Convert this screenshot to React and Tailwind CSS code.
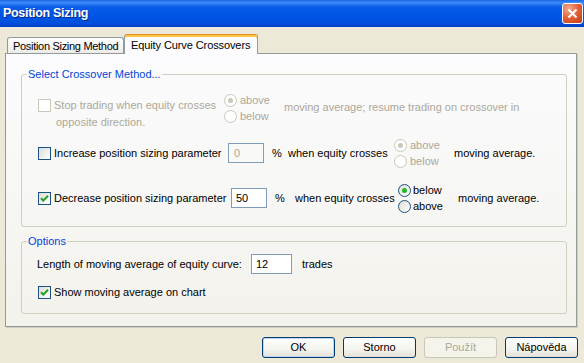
import React from "react";

function Checkbox({ checked, disabled }) {
  return (
    <span
      className={`w-[13px] h-[13px] shrink-0 border flex items-center justify-center ${
        disabled
          ? "border-[#cac8bb] bg-white"
          : "border-[#1c5180] bg-[linear-gradient(135deg,#dcdcd7,#ffffff)]"
      }`}
    >
      {checked && (
        <svg width="9" height="9" viewBox="0 0 9 9">
          <path d="M1 4.2 L3.3 6.6 L8 1.8" fill="none" stroke="#21a121" strokeWidth="2" />
        </svg>
      )}
    </span>
  );
}

function Radio({ checked, disabled }) {
  return (
    <span
      className={`w-[13px] h-[13px] shrink-0 rounded-full border flex items-center justify-center ${
        disabled
          ? "border-[#cac8bb] bg-white"
          : "border-[#1c5180] bg-[linear-gradient(135deg,#dcdcd7,#ffffff)]"
      }`}
    >
      {checked && (
        <span
          className={`w-[5px] h-[5px] rounded-full ${
            disabled ? "bg-[#cac8bb]" : "bg-[#21b821]"
          }`}
        />
      )}
    </span>
  );
}

function Button({ children, disabled, isDefault }) {
  return (
    <div
      className={`w-[73px] h-[21px] rounded-[3px] border flex items-center justify-center ${
        disabled
          ? "border-[#c9c7ba] bg-[#f5f4ea] text-[#aca899]"
          : "border-[#003c74] bg-[linear-gradient(to_bottom,#ffffff,#f3f3ef_60%,#e3e0d6)] text-black"
      } ${isDefault ? "shadow-[inset_0_0_0_1px_#c2d5f2]" : ""}`}
    >
      {children}
    </div>
  );
}

export default function App() {
  return (
    <div className="w-[584px] h-[363px] bg-[#ece9d8] flex flex-col overflow-hidden font-['Liberation_Sans',Arial,sans-serif] text-[11px] text-black leading-[13px] whitespace-nowrap">
      {/* Title bar */}
      <div className="h-[27px] shrink-0 flex items-center justify-between pl-[3px] pr-[1px] bg-[linear-gradient(to_bottom,#1b66ea_0%,#3c8df8_10%,#0b5ce8_25%,#0055e5_55%,#0050dd_85%,#003fc4_100%)]">
        <span className="text-white font-bold text-[12.5px] tracking-[-0.3px] [text-shadow:1px_1px_0_#0a2a80]">
          Position Sizing
        </span>
        <span className="w-[21px] h-[21px] rounded-[3px] border border-white bg-[radial-gradient(circle_at_30%_25%,#f3a98c,#df5a31_55%,#c13c19)] flex items-center justify-center">
          <svg width="11" height="11" viewBox="0 0 11 11">
            <path d="M1.5 1.5 L9.5 9.5 M9.5 1.5 L1.5 9.5" stroke="white" strokeWidth="2" />
          </svg>
        </span>
      </div>

      <div className="flex flex-col pl-[5px]">
        {/* Tabs */}
        <div className="mt-[7px] h-[19px] flex items-end pl-[2px]">
          <div className="w-[117px] h-[16px] border-t border-l border-r border-[#919b9c] rounded-t-[3px] bg-[linear-gradient(to_bottom,#ffffff,#ecebe6)] flex items-center pl-[5px] pt-[1px] tracking-[-0.3px] overflow-hidden">
            Position Sizing Method
          </div>
          <div className="w-[134px] h-[20px] -mb-px relative z-10 border-l border-r border-[#919b9c] border-t border-t-[#e68b2c] shadow-[inset_0_2px_0_#ffc73c] rounded-t-[3px] bg-[#fcfcfe] flex items-center pl-[6px] pt-[2px] tracking-[-0.1px]">
            Equity Curve Crossovers
          </div>
        </div>

        {/* Panel */}
        <div className="w-[572px] h-[274px] border border-[#919b9c] bg-[linear-gradient(to_bottom,#fcfcfe,#f3f2ec)] shadow-[1px_1px_0_#d3cfbf] flex flex-col pl-[15px]">
          <fieldset className="w-[546px] mt-[14px] border border-[#d0d0bf] rounded-[3px] pl-[16px] pb-[12px]">
            <legend className="-ml-[11px] px-[1px] text-[#0046d5] leading-[13px]">
              Select Crossover Method...
            </legend>

            {/* Row 1 */}
            <div className="mt-[11px] flex items-start text-[#aca899]">
              <div className="w-[186px] mt-[5px] leading-[17px]">
                <div className="flex items-center gap-[3px]">
                  <Checkbox disabled />
                  <span>Stop trading when equity crosses</span>
                </div>
                <div className="pl-[18px]">opposite direction.</div>
              </div>
              <div className="w-[60px] flex flex-col">
                <div className="h-[16px] flex items-center gap-[3px]">
                  <Radio checked disabled />
                  <span>above</span>
                </div>
                <div className="h-[16px] flex items-center gap-[3px]">
                  <Radio disabled />
                  <span>below</span>
                </div>
              </div>
              <div className="mt-[7px] leading-[17px]">
                moving average; resume trading on crossover in
              </div>
            </div>

            {/* Row 2 */}
            <div className="mt-[6px] h-[32px] flex items-center">
              <div className="w-[190px] flex items-center gap-[3px]">
                <Checkbox />
                <span>Increase position sizing parameter</span>
              </div>
              <div className="w-[36px] h-[20px] border border-[#7f9db9] bg-[#f9f9f6] text-[#aca899] flex items-center pl-[5px]">
                0
              </div>
              <span className="ml-[8px] w-[16px]">%</span>
              <span className="w-[106px]">when equity crosses</span>
              <div className="w-[60px] flex flex-col text-[#aca899]">
                <div className="h-[16px] flex items-center gap-[3px]">
                  <Radio checked disabled />
                  <span>above</span>
                </div>
                <div className="h-[16px] flex items-center gap-[3px]">
                  <Radio disabled />
                  <span>below</span>
                </div>
              </div>
              <span>moving average.</span>
            </div>

            {/* Row 3 */}
            <div className="mt-[13px] h-[32px] flex items-center">
              <div className="w-[193px] flex items-center gap-[3px]">
                <Checkbox checked />
                <span>Decrease position sizing parameter</span>
              </div>
              <div className="w-[36px] h-[20px] border border-[#7f9db9] bg-white flex items-center pl-[4px]">
                50
              </div>
              <span className="ml-[8px] w-[20px]">%</span>
              <span className="w-[103px]">when equity crosses</span>
              <div className="w-[60px] flex flex-col">
                <div className="h-[16px] flex items-center gap-[2px]">
                  <Radio checked />
                  <span>below</span>
                </div>
                <div className="h-[16px] flex items-center gap-[2px]">
                  <Radio />
                  <span>above</span>
                </div>
              </div>
              <span>moving average.</span>
            </div>
          </fieldset>

          <fieldset className="w-[546px] mt-[8px] border border-[#d0d0bf] rounded-[3px] pl-[15px] pb-[13px]">
            <legend className="-ml-[10px] px-[1px] text-[#0046d5] leading-[13px]">Options</legend>
            <div className="mt-[6px] h-[20px] flex items-center">
              <span className="w-[214px]">Length of moving average of equity curve:</span>
              <div className="w-[41px] h-[20px] border border-[#7f9db9] bg-white flex items-center pl-[4px]">
                12
              </div>
              <span className="ml-[10px]">trades</span>
            </div>
            <div className="mt-[10px] h-[16px] flex items-center gap-[3px] pl-[1px]">
              <Checkbox checked />
              <span>Show moving average on chart</span>
            </div>
          </fieldset>
        </div>
      </div>

      {/* Buttons */}
      <div className="mt-[10px] flex justify-end gap-[8px] pr-[6px]">
        <Button isDefault>OK</Button>
        <Button>Storno</Button>
        <Button disabled>Použít</Button>
        <Button>Nápověda</Button>
      </div>
    </div>
  );
}
